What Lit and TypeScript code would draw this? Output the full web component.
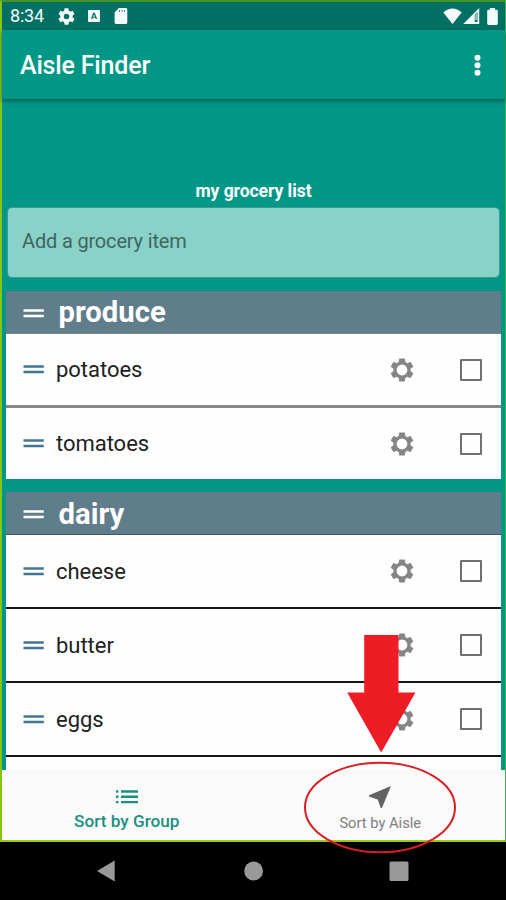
import { LitElement, html, svg, css } from "lit";
import { customElement, property } from "lit/decorators.js";

const GEAR =
  "M19.14 12.94c.04-.3.06-.61.06-.94 0-.32-.02-.64-.07-.94l2.03-1.58a.49.49 0 0 0 .12-.61l-1.92-3.32a.488.488 0 0 0-.59-.22l-2.39.96c-.5-.38-1.03-.7-1.62-.94l-.36-2.54a.484.484 0 0 0-.48-.41h-3.84c-.24 0-.43.17-.47.41l-.36 2.54c-.59.24-1.13.57-1.62.94l-2.39-.96c-.22-.08-.47 0-.59.22L2.74 8.87c-.12.21-.08.47.12.61l2.03 1.58c-.05.3-.09.63-.09.94s.02.64.07.94l-2.03 1.58a.49.49 0 0 0-.12.61l1.92 3.32c.12.22.37.29.59.22l2.39-.96c.5.38 1.03.7 1.62.94l.36 2.54c.05.24.24.41.48.41h3.84c.24 0 .44-.17.47-.41l.36-2.54c.59-.24 1.13-.56 1.62-.94l2.39.96c.22.08.47 0 .59-.22l1.92-3.32c.12-.22.07-.47-.12-.61z";
const HOLE_SMALL = "M12 15.2A3.2 3.2 0 1 1 12 8.8a3.2 3.2 0 0 1 0 6.4z";
const HOLE_LARGE = "M12 16.5A4.5 4.5 0 1 1 12 7.5a4.5 4.5 0 0 1 0 9z";

const gear = (hole: string) => svg`<path fill-rule="evenodd" d="${GEAR + hole}"/>`;

@customElement("status-bar")
class StatusBar extends LitElement {
  static styles = css`
    :host { display: flex; align-items: center; flex: none; height: 28px; background: #007065; color: #f2faf9; padding: 0 7px 0 8px; font-size: 18px; letter-spacing: -0.2px; }
    .time { width: 48px; line-height: 28px; }
    svg { display: block; fill: #f5fbfa; }
    .gear { width: 17px; height: 17px; }
    .letter { width: 12px; height: 12px; margin-left: 13px; }
    .card { width: 14px; height: 16px; margin-left: 14px; }
    .grow { flex: 1; }
    .wifi { width: 19px; height: 16px; }
    .signal { width: 17px; height: 16px; margin: 0 0 0 1px; }
    .battery { width: 11px; height: 17px; margin-left: 7.5px; }
  `;
  render() {
    return html`
      <span class="time">8:34</span>
      <svg class="gear" viewBox="2 2 20 20">${gear(HOLE_SMALL)}</svg>
      <svg class="letter" viewBox="0 0 12 12"><path fill-rule="evenodd" d="M1 0H11Q12 0 12 1V11Q12 12 11 12H1Q0 12 0 11V1Q0 0 1 0ZM5.2 2.8L2.9 9H4.2L4.7 7.7H7.3L7.8 9H9.1L6.8 2.8ZM6 4.3L6.9 6.7H5.1Z"/></svg>
      <svg class="card" viewBox="0 0 14 16"><path fill-rule="evenodd" d="M4.8 0H12Q13.3 0 13.3 1.4V14.6Q13.3 16 12 16H2Q.6 16 .6 14.6V4.6ZM5.2 2V4H6V2ZM7.6 2V4H8.4V2ZM10 2V4H10.8V2Z"/></svg>
      <span class="grow"></span>
      <svg class="wifi" viewBox="0 0 19 16"><path d="M9.5 16L.3 4.4Q9.5-3.6 18.7 4.4Z"/></svg>
      <svg class="signal" viewBox="0 0 17 16"><path fill-rule="evenodd" d="M16.2 0V16H.2ZM11.8 6.2V14H14.5V4.6Z"/><path d="M12.6 6h1.1v6h-1.1z"/></svg>
      <svg class="battery" viewBox="0 0 11 17"><path d="M3 0H8V1.7H9.6Q10.8 1.7 10.8 3V15.6Q10.8 17 9.6 17H1.4Q.2 17 .2 15.6V3Q.2 1.7 1.4 1.7H3Z"/></svg>
    `;
  }
}

@customElement("grocery-group")
class GroceryGroup extends LitElement {
  @property() name = "";
  @property({ type: Array }) items: string[] = [];
  @property({ reflect: true }) rule = "gray";
  static styles = css`
    :host { display: block; background: #fefefe; }
    .head { display: flex; align-items: center; height: 43px; box-sizing: border-box; background: #607d8b; color: #fff; font-weight: 700; font-size: 29.3px; letter-spacing: 0; padding-left: 17px; border-bottom: 1px solid #70878d; }
    :host([rule="black"]) .head { border-bottom-color: #405860; }
    .head .name { margin-left: 14.5px; line-height: 40px; }
    :host([rule="black"]) .name { padding-top: 1px; }
    .head .handle { position: relative; top: 1px; }
    .row { display: flex; align-items: center; height: 71px; padding: 0 19.5px 0 17px; color: #212121; font-size: 22px; }
    .row + .row { border-top: 3px solid #888; }
    :host([rule="black"]) .row { height: 72px; }
    :host([rule="black"]) .row + .row { border-top: 2px solid #161616; }
    .label { flex: 1; margin-left: 12px; line-height: 30px; padding-top: 1px; letter-spacing: -0.03px; }
    .handle { display: block; width: 21px; height: 9px; fill: #fff; }
    .row .handle { fill: #417690; }
    .cog { width: 24px; height: 24px; fill: #858585; margin-right: 46px; }
    .box { width: 22px; height: 22px; box-sizing: border-box; border: 2px solid #707070; border-radius: 1px; }
  `;
  private handle() {
    return html`<svg class="handle" viewBox="0 0 21 9"><path d="M.5 .3H20.8V2.8H.5ZM.5 5.8H20.8V8.3H.5Z"/></svg>`;
  }
  render() {
    return html`
      <div class="head">${this.handle()}<span class="name">${this.name}</span></div>
      ${this.items.map(
        (item) => html`<div class="row">
          ${this.handle()}<span class="label">${item}</span>
          <svg class="cog" viewBox="2 2 20 20">${gear(HOLE_LARGE)}</svg>
          <span class="box"></span>
        </div>`
      )}
    `;
  }
}

@customElement("app-root")
class AppRoot extends LitElement {
  static styles = css`
    :host { display: block; position: relative; width: 506px; height: 900px; overflow: hidden; background: #000; font-family: Roboto, "Liberation Sans", sans-serif; }
    .screen { display: flex; flex-direction: column; box-sizing: border-box; height: 842px; background: #009787; border: solid #8bc51b; border-width: 2px 1px 2px 2px; border-color: #4b9224 #39b54a #a2c614 #86c41b; }
    .appbar { flex: none; display: flex; align-items: center; justify-content: space-between; height: 69px; padding: 0 24px 0 18px; color: #fff; font-size: 25px; font-weight: 500; box-shadow: 0 2px 4px rgba(0, 50, 45, .6); letter-spacing: -0.17px; }
    .title { line-height: 32px; padding-top: 3px; }
    .more { width: 7px; height: 22px; fill: #fff; }
    .content { flex: 1; min-height: 0; overflow: hidden; padding: 82px 4px 0 4px; }
    .list-name { margin: 0; text-align: center; color: #fff; font-size: 17.5px; font-weight: 700; line-height: 20px; letter-spacing: -0.05px; }
    .field { height: 71px; margin: 6px 1px 13px; box-sizing: border-box; border: 1px solid #3f9b91; border-radius: 5px; background: #8ad1c8; color: #3f6662; font-size: 20px; line-height: 66px; padding-left: 14px; letter-spacing: -0.17px; }
    .groups { display: flex; flex-direction: column; gap: 13px; }
    .tabs { flex: none; display: flex; height: 70px; background: #fafafa; }
    .tab { flex: 1; display: flex; flex-direction: column; align-items: center; color: #808080; font-size: 14.7px; padding-left: 2px; }
    .tab.on { color: #1a9080; font-size: 17.2px; font-weight: 500; padding: 0 2px 0 0; }
    .tab svg { fill: currentColor; display: block; }
    .tab .lines { width: 22px; height: 14px; margin: 20px 0 7px; }
    .tab .arrow { width: 22px; height: 22px; fill: #626262; margin: 16px 0 5px; }
    .tab span { line-height: 20px; }
    .sysnav { display: flex; height: 58px; justify-content: space-between; align-items: center; padding: 0 97px 0 96px; fill: #999; }
    .sysnav svg { display: block; width: 20px; height: 22px; }
    .pointer, .ring { position: absolute; overflow: visible; }
    .pointer { left: 347px; top: 635px; width: 69px; height: 118px; fill: #ee1c25; }
    .ring { left: 304px; top: 761px; width: 152px; height: 92px; fill: none; stroke: #dc1c22; stroke-width: 2; }
  `;
  render() {
    return html`
      <div class="screen">
        <status-bar></status-bar>
        <header class="appbar">
          <span class="title">Aisle Finder</span>
          <svg class="more" viewBox="0 0 7 22"><circle cx="3.5" cy="3.7" r="3"/><circle cx="3.5" cy="11.2" r="3"/><circle cx="3.5" cy="18.7" r="3"/></svg>
        </header>
        <main class="content">
          <p class="list-name">my grocery list</p>
          <div class="field">Add a grocery item</div>
          <div class="groups">
            <grocery-group name="produce" .items=${["potatoes", "tomatoes"]}></grocery-group>
            <grocery-group name="dairy" rule="black" .items=${["cheese", "butter", "eggs", ""]}></grocery-group>
          </div>
        </main>
        <nav class="tabs">
          <div class="tab on">
            <svg class="lines" viewBox="0 0 22 14"><path d="M0 .3H2.4V2.7H0ZM5 .3H22V2.7H5ZM0 5.6H2.4V8H0ZM5 5.6H22V8H5ZM0 10.9H2.4V13.3H0ZM5 10.9H22V13.3H5Z"/></svg>
            <span>Sort by Group</span>
          </div>
          <div class="tab">
            <svg class="arrow" viewBox="0 0 22 22"><path d="M22 0L0 9.3V10.5L8.7 13.6L11.7 22H12.9Z"/></svg>
            <span>Sort by Aisle</span>
          </div>
        </nav>
      </div>
      <div class="sysnav">
        <svg viewBox="0 0 20 22"><path d="M1 11L18.7 .5V21.5Z"/></svg>
        <svg viewBox="0 0 20 22"><circle cx="10.6" cy="11" r="9.4"/></svg>
        <svg viewBox="0 0 20 22"><rect x=".5" y="1.5" width="19" height="19.5" rx="1.5"/></svg>
      </div>
      <svg class="pointer" viewBox="0 0 69 118"><path d="M17.2 0H51.5V57.5H68.5L34.2 117.5L.2 57.5H17.2Z"/></svg>
      <svg class="ring" viewBox="0 0 152 92"><ellipse cx="76" cy="46.5" rx="75" ry="44.7"/></svg>
    `;
  }
}
